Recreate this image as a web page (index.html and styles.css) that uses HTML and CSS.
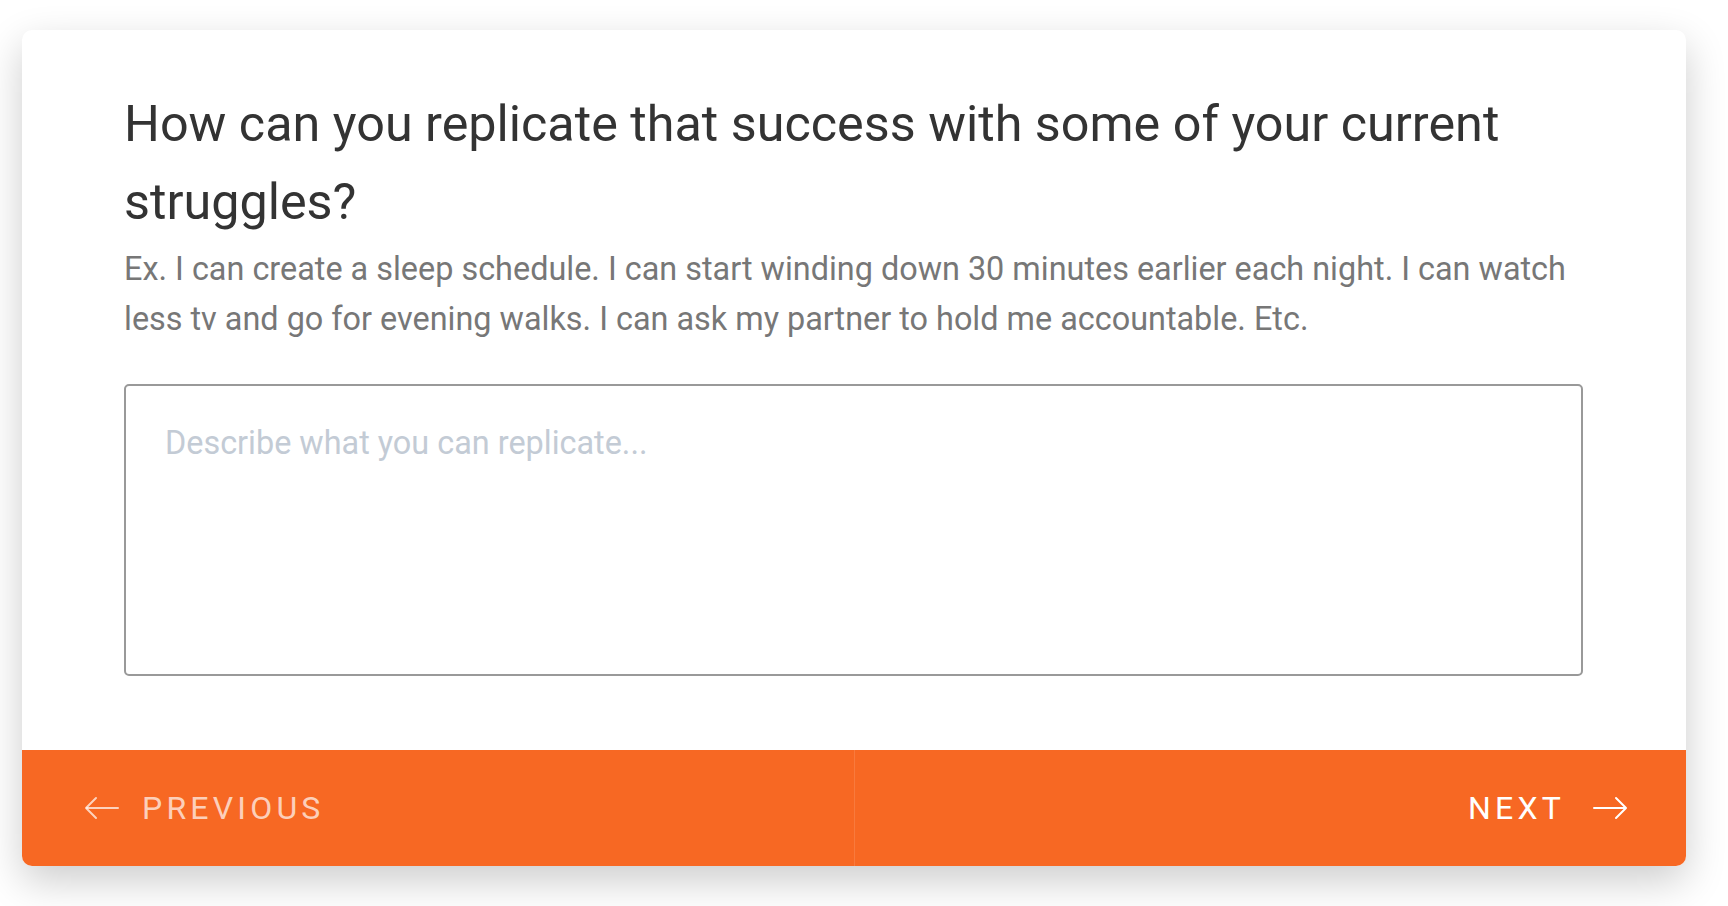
FILE: index.html
```html
<!DOCTYPE html>
<html lang="en">
<head>
    <meta charset="UTF-8">
    <meta name="viewport" content="width=device-width, initial-scale=1.0">
    <title>Reflection - Replicate Success</title>
    <link rel="stylesheet" href="styles.css">
</head>
<body>
    <div class="page">
        <div class="card">
            <div class="card-body">
                <h1 class="question">How can you replicate that success with some of your current struggles?</h1>
                <p class="hint">Ex. I can create a sleep schedule. I can start winding down 30 minutes earlier each night. I can watch less tv and go for evening walks. I can ask my partner to hold me accountable. Etc.</p>
                <textarea class="answer" placeholder="Describe what you can replicate..."></textarea>
            </div>
            <div class="card-nav">
                <button type="button" class="nav-btn nav-prev">
                    <svg width="36" height="24" viewBox="0 0 36 24" fill="none" stroke="currentColor" stroke-width="2" stroke-linecap="round" stroke-linejoin="round">
                        <path d="M34 12H3"></path>
                        <path d="M12 2L2 12l10 10"></path>
                    </svg>
                    <span>Previous</span>
                </button>
                <button type="button" class="nav-btn nav-next">
                    <span>Next</span>
                    <svg width="36" height="24" viewBox="0 0 36 24" fill="none" stroke="currentColor" stroke-width="2" stroke-linecap="round" stroke-linejoin="round">
                        <path d="M2 12h31"></path>
                        <path d="M24 2l10 10-10 10"></path>
                    </svg>
                </button>
            </div>
        </div>
    </div>
</body>
</html>
```

FILE: styles.css
```css
body {
    margin: 0;
    background-color: #fff;
    font-family: Roboto, "Liberation Sans", Arial, sans-serif;
}
.page {
    padding: 30px 42px 40px 22px;
}
.card {
    background-color: #fff;
    border-radius: 10px;
    box-shadow: 0 15px 40px rgba(0, 0, 0, 0.2);
    overflow: hidden;
}
.card-body {
    padding: 55px 103px 74px 102px;
}
.question {
    margin: 0;
    font-size: 50.3px;
    line-height: 78px;
    font-weight: 400;
    color: #333;
}
.hint {
    margin: 3px 0 0;
    font-size: 32.4px;
    line-height: 50px;
    color: #777;
}
.answer {
    display: block;
    width: 100%;
    height: 292px;
    margin-top: 40px;
    padding: 33px 39px;
    box-sizing: border-box;
    border: 2px solid #999;
    border-radius: 5px;
    font-family: inherit;
    font-size: 32.4px;
    line-height: 1.5;
    color: #333;
    resize: none;
    outline: none;
}
.answer::placeholder {
    color: #c3cbd5;
}
.card-nav {
    display: flex;
    height: 116px;
    background-color: #f76823;
}
.nav-btn {
    flex: 1;
    display: flex;
    align-items: center;
    gap: 22px;
    padding: 0 58px 0 62px;
    border: none;
    background: none;
    font-family: inherit;
    font-size: 32px;
    letter-spacing: 4.2px;
    text-transform: uppercase;
    cursor: pointer;
}
.nav-prev {
    color: rgba(255, 255, 255, 0.7);
}
.nav-next {
    justify-content: flex-end;
    gap: 27px;
    color: #fff;
    border-left: 1px solid rgba(255, 255, 255, 0.12);
}
```
